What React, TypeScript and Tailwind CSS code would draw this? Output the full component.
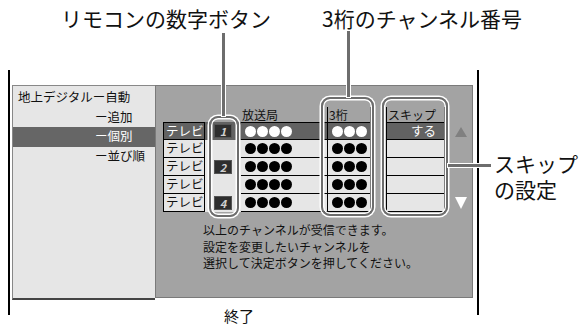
const font = "font-['Noto_Sans_CJK_JP','Noto_Sans',sans-serif]";

const rows = [
  { badge: "1", active: true, skip: "する" },
  { badge: "", active: false, skip: "" },
  { badge: "2", active: false, skip: "" },
  { badge: "", active: false, skip: "" },
  { badge: "4", active: false, skip: "" },
];

const menu = [
  { label: "地上デジタルー自動", indent: false, active: false },
  { label: "ー追加", indent: true, active: false },
  { label: "ー個別", indent: true, active: true },
  { label: "ー並び順", indent: true, active: false },
];

const Dots = ({ n, white }: { n: number; white: boolean }) => (
  <div className="flex gap-[1px]">
    {Array.from({ length: n }).map((_, i) => (
      <span
        key={i}
        className={`block h-[11px] w-[11px] rounded-full ${white ? "bg-white" : "bg-black"}`}
      />
    ))}
  </div>
);

const Callout = ({ cls }: { cls: string }) => (
  <div
    className={`absolute rounded-[9px] border-[2.5px] border-[#6d6d6d] shadow-[0_0_0_1.5px_#fff,inset_0_0_0_1.5px_#fff] ${cls}`}
  />
);

export default function App() {
  return (
    <div className={`relative h-[325px] w-[579px] overflow-hidden bg-white text-[#111] ${font}`}>
      {/* labels */}
      <div className="absolute left-[61px] top-[4px] text-[21px] leading-[28px]">リモコンの数字ボタン</div>
      <div className="absolute left-[322px] top-[4px] text-[21px] leading-[28px]">3桁のチャンネル番号</div>
      <div className="absolute left-[494px] top-[150px] text-[21px] leading-[26px]">
        スキップ
        <br />
        の設定
      </div>

      {/* screen frame */}
      <div className="ml-[8px] mt-[70px] h-[245px] w-[471px] border-x-2 border-black pl-[2px] pr-[4px] pt-[15px]">
        <div className="flex h-[215px]">
          {/* left menu */}
          <div className="h-[215px] w-[143px] border-l border-t border-[#888] border-b-2 border-b-[#444] bg-[#e6e6e6] pt-[2px]">
            {menu.map((m) => (
              <div
                key={m.label}
                className={`flex h-[19.5px] items-center text-[12.5px] ${m.indent ? "pl-[82px]" : "pl-[5px]"} ${
                  m.active ? "bg-[#666] text-white" : ""
                }`}
              >
                {m.label}
              </div>
            ))}
          </div>

          {/* right panel */}
          <div className="h-[213px] w-[318px] border border-[#7a7a7a] bg-[#a3a3a3] pl-[7px] pt-[21px]">
            <div className="flex">
              <div>
                {/* header */}
                <div className="flex h-[15px] text-[12px] leading-[15px]">
                  <div className="w-[42px]" />
                  <div className="w-[36px]" />
                  <div className="w-[86px] pl-[1px]">放送局</div>
                  <div className="w-[44px] border-x border-black pl-[1px]">3桁</div>
                  <div className="w-[15px]" />
                  <div className="w-[59px] border-x border-black pl-[1px]">スキップ</div>
                </div>
                {/* rows */}
                {rows.map((r, i) => {
                  const line = `border-b border-black ${i === 0 ? "border-t" : ""}`;
                  const bg = r.active ? "bg-[#626262] text-white" : "bg-[#e6e6e6]";
                  return (
                    <div key={i} className="flex h-[18px] text-[12.5px]">
                      <div className={`flex w-[42px] items-center border-x pl-[2px] ${line} ${bg}`}>テレビ</div>
                      <div className={`flex w-[36px] items-center justify-center ${bg}`}>
                        {r.badge && (
                          <span className="flex h-[14px] w-[18px] items-center justify-center border border-[#555] bg-[#2e2e2e] text-[11px] font-bold italic leading-none text-[#d0d0d0]">
                            {r.badge}
                          </span>
                        )}
                      </div>
                      <div className={`flex w-[86px] items-center pl-[4px] ${line} ${bg}`}>
                        <Dots n={4} white={r.active} />
                      </div>
                      <div className={`flex w-[44px] items-center justify-center border-x ${line} ${bg}`}>
                        <Dots n={3} white={r.active} />
                      </div>
                      <div className="w-[15px]" />
                      <div className={`flex w-[59px] items-center border-x pl-[24px] ${line} ${bg}`}>{r.skip}</div>
                    </div>
                  );
                })}
              </div>
              {/* scroll arrows */}
              <div className="ml-[10px] flex flex-col justify-between pb-[3px] pt-[20px]">
                <svg width="12" height="10" viewBox="0 0 12 10">
                  <polygon points="6,0 12,10 0,10" fill="#808080" />
                </svg>
                <svg width="12" height="12" viewBox="0 0 12 12">
                  <polygon points="0,0 12,0 6,12" fill="#fff" />
                </svg>
              </div>
            </div>

            <div className="ml-[40px] mt-[10px] text-[12px] leading-[16.5px]">
              <p>以上のチャンネルが受信できます。</p>
              <p>設定を変更したいチャンネルを</p>
              <p>選択して決定ボタンを押してください。</p>
            </div>
          </div>
        </div>
        <div className="ml-[212px] mt-[7px] text-[15px] leading-[18px]">終了</div>
      </div>

      {/* callout boxes and leader lines */}
      <Callout cls="left-[209px] top-[116px] h-[101px] w-[30px]" />
      <Callout cls="left-[321px] top-[97px] h-[119px] w-[53px]" />
      <Callout cls="left-[382px] top-[97px] h-[119px] w-[66px]" />
      <div className="absolute left-[222px] top-[33px] h-[83px] w-[3px] bg-[#6d6d6d] shadow-[0_0_0_1px_#fff]" />
      <div className="absolute left-[347px] top-[31px] h-[66px] w-[3px] bg-[#6d6d6d] shadow-[0_0_0_1px_#fff]" />
      <div className="absolute left-[448px] top-[164px] h-[3px] w-[43px] bg-[#6d6d6d] shadow-[0_0_0_1px_#fff]" />
    </div>
  );
}
